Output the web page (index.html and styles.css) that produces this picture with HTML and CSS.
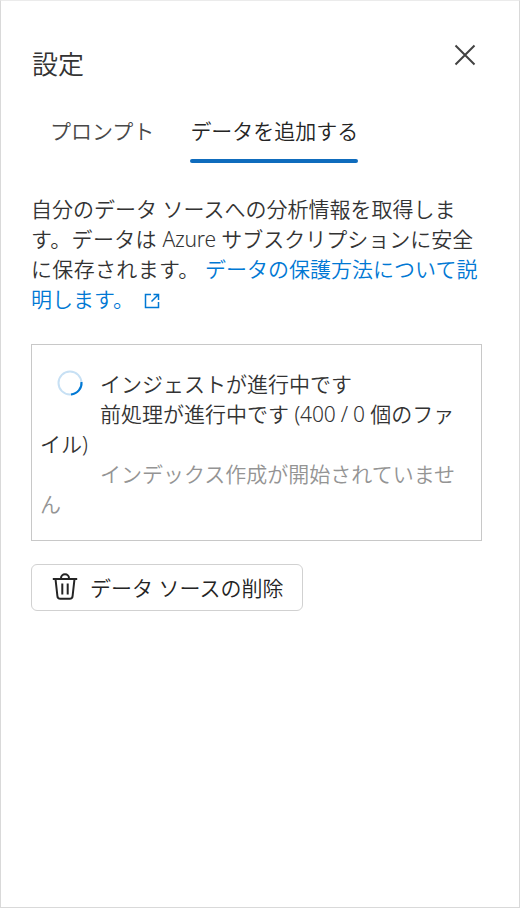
FILE: index.html
```html
<!DOCTYPE html>
<html lang="ja">
<head>
<meta charset="utf-8">
<title>設定</title>
<link rel="stylesheet" href="styles.css">
</head>
<body>
<main class="panel">
  <header class="header">
    <h1>設定</h1>
    <button class="close" aria-label="閉じる"><svg width="22" height="22" viewBox="0 0 22 22"><path d="M1.5 1.5l19 19M20.5 1.5l-19 19"/></svg></button>
  </header>
  <nav class="tabs">
    <a class="tab">プロンプト</a>
    <a class="tab active">データを追加する</a>
  </nav>
  <p class="intro">自分のデータ ソースへの分析情報を取得しま<span class="loose">す。データは</span> <span class="latin">Azure</span> サブスクリプションに安全<span class="loose">に保存されます。</span> <a class="link">データの保護方法について説明します。 <svg class="ext" width="16" height="16" viewBox="0 0 16 16"><path d="M7 1.5H1.5v13h13V9M9.5 1.5h5V7M14.5 1.5L7.5 8.5"/></svg></a></p>
  <section class="status">
    <div class="line"><svg class="spinner" width="26" height="26" viewBox="0 0 26 26"><circle class="track" cx="13" cy="13" r="11.5"/><path class="arc" d="M24.5 12A11.5 11.5 0 0 1 14 24.5"/></svg>インジェストが進行中です</div>
    <div class="line">前処理が進行中です <span class="latin">(400 / 0</span> 個のファイル)</div>
    <div class="line muted">インデックス作成が開始されていません</div>
  </section>
  <button class="delete"><svg width="26" height="28" viewBox="0 0 26 28"><path d="M.8 6h24.4M9 6V5.3a4 4 0 0 1 8 0V6M3.5 6l1.9 17a3 3 0 0 0 3 2.8h9.2a3 3 0 0 0 3-2.8l1.9-17M10.3 10.5v11M15.7 10.5v11"/></svg><span>データ ソースの削除</span></button>
</main>
</body>
</html>
```
FILE: styles.css
```css
* { box-sizing: border-box; }
body { margin: 0; background: #fff; color: #333; font: 350 21px/30px "Noto Sans", "Noto Sans CJK JP", sans-serif; }
.panel { height: 908px; border: 1px solid #d9d9d9; border-top-color: #ebebeb; padding: 42px 37px 0 30px; }
.header { display: flex; justify-content: space-between; align-items: flex-start; height: 68px; }
h1 { margin: 0 0 0 1px; font-size: 26px; line-height: 42px; font-weight: 350; }
button { font: inherit; color: inherit; background: none; }
svg { fill: none; stroke: currentColor; stroke-width: 2; }
.close { border: 0; padding: 0; margin: 1px 6px 0 0; height: 22px; color: #424242; }
.close svg { display: block; }
.tabs { display: flex; gap: 36px; padding-left: 19px; height: 52px; }
.tab { height: 52px; line-height: 40px; color: #484848; white-space: nowrap; }
.active { color: #242424; position: relative; }
.active::after { content: ""; position: absolute; left: 0; right: 0; bottom: 0; height: 4px; border-radius: 2px; background: #0f6cbd; }
.intro { margin: 31px 0 0; }
.loose { letter-spacing: .34px; }
.latin { letter-spacing: -.2px; }
.link { color: #0078d4; }
.ext { stroke-width: 1.5; margin-left: 5px; vertical-align: -2px; }
.status { border: 1px solid #c8c8c8; height: 197px; margin-top: 30px; padding: 24px 20px 0 8px; }
.line { text-indent: 60px; position: relative; }
.spinner { position: absolute; left: 17px; top: 1px; }
.track { stroke: #c7e0f4; }
.arc { stroke: #0078d4; }
.muted { color: #949494; }
.delete { display: flex; align-items: center; width: 272px; height: 47px; margin-top: 23px; padding: 0 0 0 20px; border: 1px solid #d1d1d1; border-radius: 6px; gap: 12px; color: #242424; }
.delete svg { margin-top: -2px; }
```
